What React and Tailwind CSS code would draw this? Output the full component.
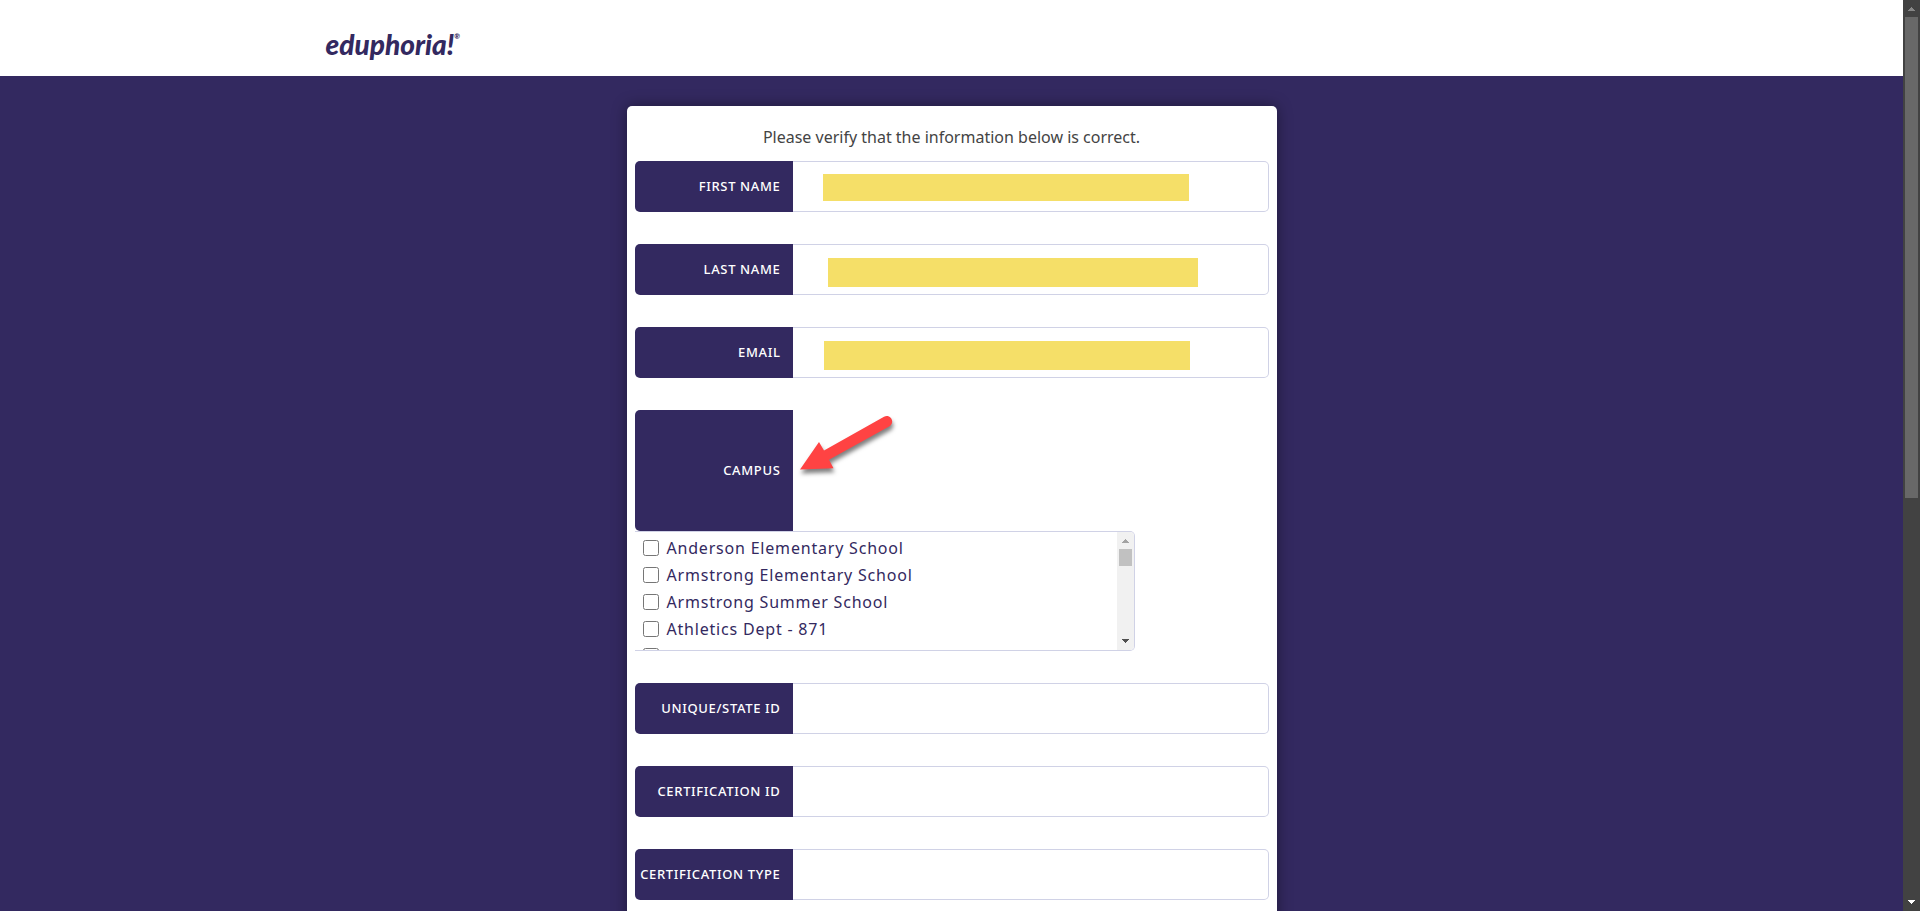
const nameFields = [
    { id: 'first-name', label: 'First Name', mask: 'left-[30px] top-[13px] h-[27px] w-[366px]' },
    { id: 'last-name', label: 'Last Name', mask: 'left-[35px] top-[14px] h-[29px] w-[370px]' },
    { id: 'email', label: 'Email', mask: 'left-[31px] top-[14px] h-[29px] w-[366px]' },
];

const idFields = [
    { id: 'state-id', label: 'Unique/State ID' },
    { id: 'certification-id', label: 'Certification ID' },
    { id: 'certification-type', label: 'Certification Type' },
];

const campuses = [
    'Anderson Elementary School',
    'Armstrong Elementary School',
    'Armstrong Summer School',
    'Athletics Dept - 871',
    'Austin Elementary School',
];

function Field({ id, label, mask }) {
    return (
        <div className="mb-8 flex h-[51px]">
            <label
                htmlFor={id}
                className="flex w-[158px] shrink-0 items-center justify-end rounded-l-[5px] bg-[#332960] pr-3 text-[13px] font-medium tracking-wider whitespace-nowrap text-white uppercase"
            >
                {label}
            </label>
            <div className="relative flex-1">
                <input
                    id={id}
                    type="text"
                    className="h-full w-full rounded-r-[5px] border border-l-0 border-[#d0d2e6] bg-white px-4 text-base text-[#332960] outline-none"
                />
                {mask && <span className={`absolute bg-[#f5df68] ${mask}`} />}
            </div>
        </div>
    );
}

function Triangle({ className, down }) {
    return (
        <svg viewBox="0 0 7 4" className={className} fill="currentColor" shapeRendering="crispEdges">
            <path d={down ? 'M0 0h7v1h-1v1h-1v1h-1v1h-1v-1h-1v-1h-1v-1h-1z' : 'M3 0h1v1h1v1h1v1h1v1h-7v-1h1v-1h1v-1h1z'} />
        </svg>
    );
}

export default function App() {
    return (
        <div className="flex h-screen overflow-hidden bg-[#332960] font-['Noto_Sans','Open_Sans',sans-serif]">
            <div className="min-w-0 flex-1 overflow-hidden">
                <header className="h-[76px] bg-white">
                    <div className="mx-auto flex h-full w-[1252px] max-w-full items-start pt-[26px]">
                        <a
                            href="#"
                            className="flex items-start font-['Lato',sans-serif] text-[28px] leading-[36px] font-black text-[#332960] italic"
                        >
                            eduphoria!
                            <sup className="top-0 pt-[5px] text-[7px] leading-[10px] not-italic">®</sup>
                        </a>
                    </div>
                </header>

                {/* Registration card */}
                <main className="mx-auto mt-[30px] w-[650px] max-w-full rounded-[5px] bg-white px-2 pt-[19px] pb-8 shadow-[0_0_15px_rgba(0,0,0,0.4)]">
                    <p className="mb-3 text-center text-base leading-6 text-[#444444]">
                        Please verify that the information below is correct.
                    </p>

                    <form>
                        {nameFields.map((field) => (
                            <Field key={field.id} {...field} />
                        ))}

                        {/* Campus picker */}
                        <fieldset className="mb-8">
                            <div className="flex h-[121px]">
                                <div
                                    id="campus-label"
                                    className="flex w-[158px] items-center justify-end rounded-l-[5px] bg-[#332960] pr-3 text-[13px] font-medium tracking-wider text-white uppercase"
                                >
                                    Campus
                                </div>
                                <div className="relative flex-1">
                                    <svg
                                        viewBox="0 0 110 72"
                                        className="absolute top-px left-0 h-[72px] w-[110px] drop-shadow-[1px_4px_2px_rgba(0,0,0,0.5)]"
                                        fill="#ff4343"
                                    >
                                        <path d="M7 58.5 26 31l5 8.5L91 5.7c6.5-3 11.5 5.5 5.5 9.6L36 48.8l4.5 8.4z" />
                                    </svg>
                                </div>
                            </div>
                            <div className="flex h-[120px] w-[500px] max-w-full overflow-hidden rounded-r-[5px] border border-l-0 border-[#d0d2e6]">
                                <ul aria-labelledby="campus-label" className="flex-1 overflow-hidden pt-[2px] pl-2">
                                    {campuses.map((campus) => (
                                        <li key={campus} className="h-[27px]">
                                            <label className="flex h-full items-center gap-2 text-base tracking-wider text-[#332960]">
                                                <input type="checkbox" className="size-4" />
                                                {campus}
                                            </label>
                                        </li>
                                    ))}
                                </ul>
                                <div className="flex w-[17px] flex-col items-center bg-[#f1f1f1]">
                                    <Triangle className="mt-[7px] h-1 w-[7px] text-[#a3a3a3]" />
                                    <div className="mt-[6px] h-[17px] w-[13px] bg-[#c1c1c1]" />
                                    <Triangle down className="mt-auto mb-[7px] h-1 w-[7px] text-[#505050]" />
                                </div>
                            </div>
                        </fieldset>

                        {idFields.map((field) => (
                            <Field key={field.id} {...field} />
                        ))}
                    </form>
                </main>
            </div>

            {/* Page scrollbar */}
            <div className="flex w-[17px] shrink-0 flex-col items-center bg-[#424242]">
                <Triangle className="mt-[7px] h-1 w-[7px] text-[#868686]" />
                <div className="mt-[6px] h-[481px] w-[13px] bg-[#686868]" />
                <Triangle down className="mt-auto mb-[7px] h-1 w-[7px] text-white" />
            </div>
        </div>
    );
}
